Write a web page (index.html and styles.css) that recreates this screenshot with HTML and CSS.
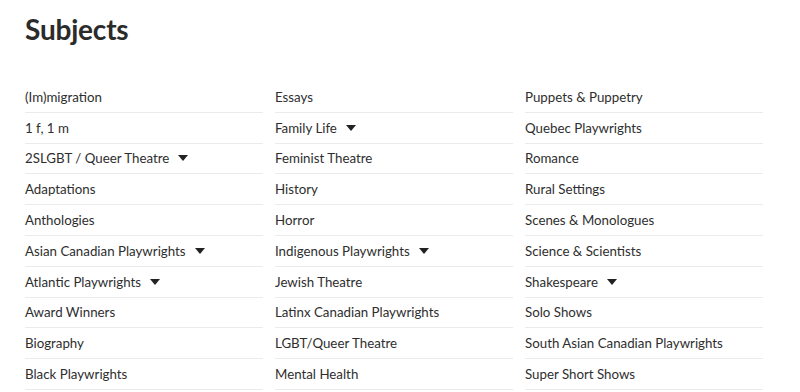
FILE: index.html
```html
<!DOCTYPE html>
<html lang="en">
<head>
    <meta charset="UTF-8">
    <meta name="viewport" content="width=device-width, initial-scale=1.0">
    <title>Subjects</title>
    <link rel="stylesheet" href="styles.css">
</head>
<body>
    <h1 class="page-title">Subjects</h1>

    <div class="subjects">
        <ul class="subject-col">
            <li><a href="#">(Im)migration</a></li>
            <li><a href="#">1 f, 1 m</a></li>
            <li><a href="#">2SLGBT / Queer Theatre</a><span class="caret"></span></li>
            <li><a href="#">Adaptations</a></li>
            <li><a href="#">Anthologies</a></li>
            <li><a href="#">Asian Canadian Playwrights</a><span class="caret"></span></li>
            <li><a href="#">Atlantic Playwrights</a><span class="caret"></span></li>
            <li><a href="#">Award Winners</a></li>
            <li><a href="#">Biography</a></li>
            <li><a href="#">Black Playwrights</a></li>
        </ul>
        <ul class="subject-col">
            <li><a href="#">Essays</a></li>
            <li><a href="#">Family Life</a><span class="caret"></span></li>
            <li><a href="#">Feminist Theatre</a></li>
            <li><a href="#">History</a></li>
            <li><a href="#">Horror</a></li>
            <li><a href="#">Indigenous Playwrights</a><span class="caret"></span></li>
            <li><a href="#">Jewish Theatre</a></li>
            <li><a href="#">Latinx Canadian Playwrights</a></li>
            <li><a href="#">LGBT/Queer Theatre</a></li>
            <li><a href="#">Mental Health</a></li>
        </ul>
        <ul class="subject-col">
            <li><a href="#">Puppets &amp; Puppetry</a></li>
            <li><a href="#">Quebec Playwrights</a></li>
            <li><a href="#">Romance</a></li>
            <li><a href="#">Rural Settings</a></li>
            <li><a href="#">Scenes &amp; Monologues</a></li>
            <li><a href="#">Science &amp; Scientists</a></li>
            <li><a href="#">Shakespeare</a><span class="caret"></span></li>
            <li><a href="#">Solo Shows</a></li>
            <li><a href="#">South Asian Canadian Playwrights</a></li>
            <li><a href="#">Super Short Shows</a></li>
        </ul>
    </div>
</body>
</html>
```

FILE: styles.css
```css
body {
    font-family: Lato, "Noto Sans", sans-serif;
    background-color: #fff;
    color: #2e2e2e;
    margin: 0;
    padding: 0 25px;
}

.page-title {
    font-size: 28px;
    font-weight: 700;
    margin: 11px 0 0;
    line-height: 36px;
    color: #2b2b2b;
    letter-spacing: -0.2px;
}

.subjects {
    display: grid;
    grid-template-columns: repeat(3, 238px);
    column-gap: 12px;
    margin-top: 35px;
}

.subject-col {
    list-style: none;
    margin: 0;
    padding: 0;
}

.subject-col li {
    display: flex;
    align-items: center;
    height: 29.8px;
    border-bottom: 1px solid #ebebeb;
    font-size: 13.3px;
}

.subject-col a {
    color: #2e2e2e;
    text-decoration: none;
}

.caret {
    width: 0;
    height: 0;
    margin-left: 9px;
    border-left: 5px solid transparent;
    border-right: 5px solid transparent;
    border-top: 6px solid #222;
}
```
